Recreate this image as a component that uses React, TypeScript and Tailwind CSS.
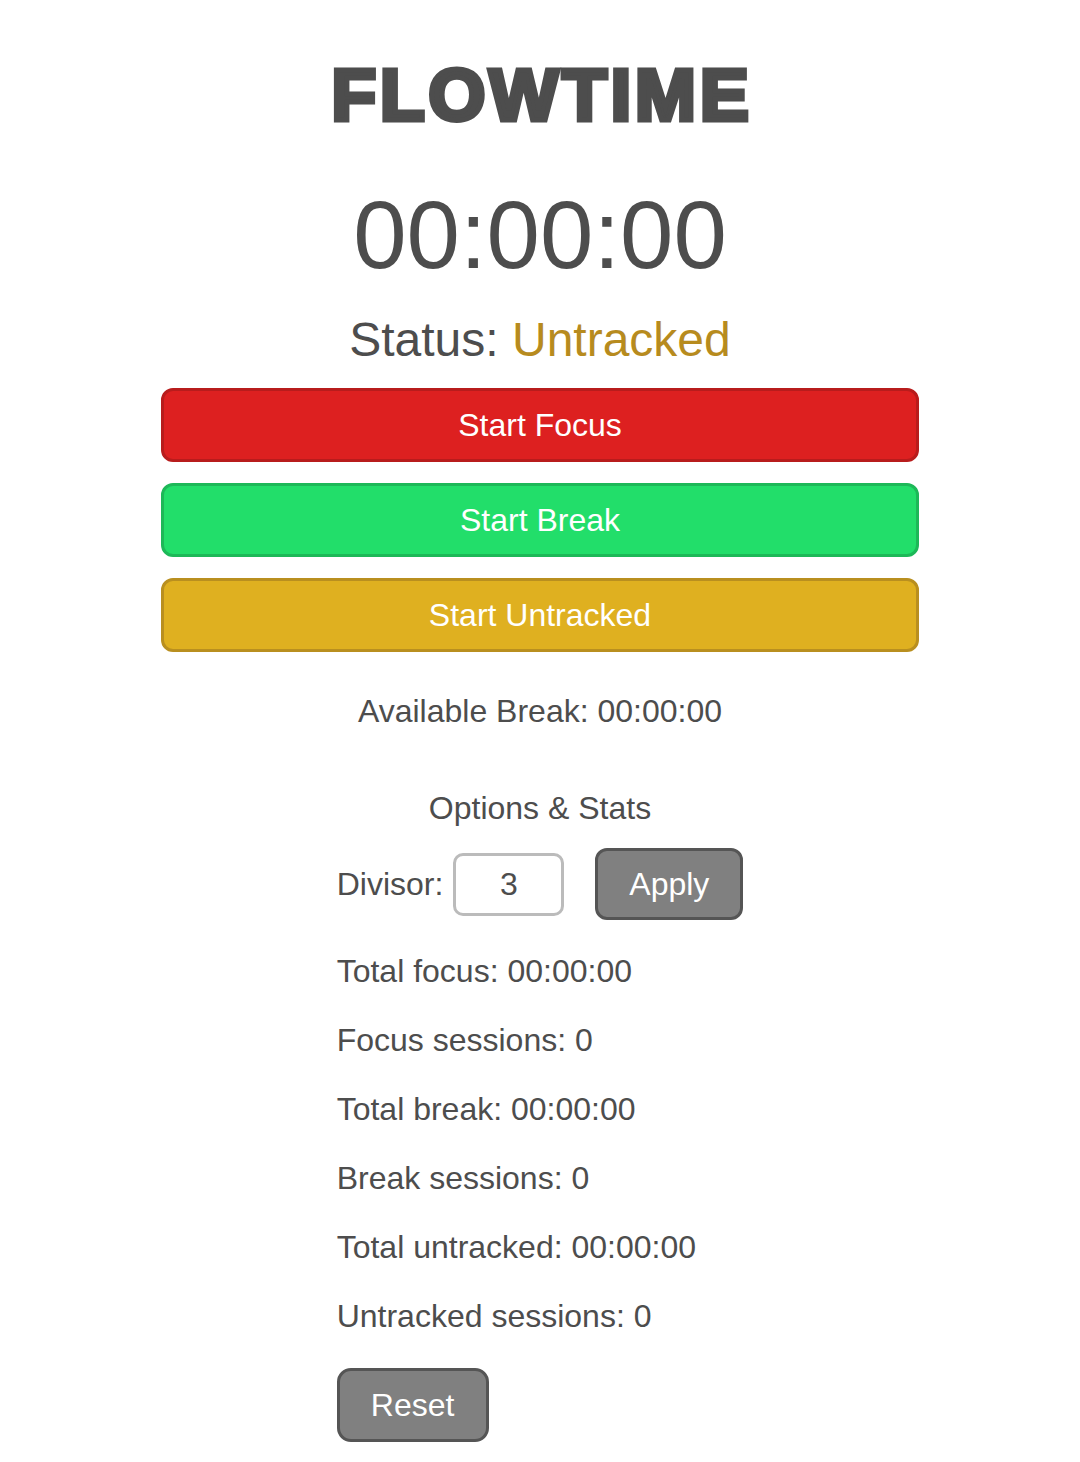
import React, { useState } from 'react';

const font = "font-['Liberation_Sans',Arial,sans-serif]";

const startButtons = [
  { label: 'Start Focus', cls: 'bg-[#dd2020] border-[#b81c1c]' },
  { label: 'Start Break', cls: 'bg-[#22de6a] border-[#1db858]' },
  { label: 'Start Untracked', cls: 'bg-[#dfb020] border-[#b98f1f]' },
];

export default function App() {
  const [divisor, setDivisor] = useState('3');

  const stats = [
    'Total focus: 00:00:00',
    'Focus sessions: 0',
    'Total break: 00:00:00',
    'Break sessions: 0',
    'Total untracked: 00:00:00',
    'Untracked sessions: 0',
  ];

  return (
    <div className={`${font} min-h-screen bg-white text-[#4d4d4d] flex flex-col items-center pt-[58px] pb-[20px]`}>
      {/* Title */}
      <h1 className="text-[73px] leading-none font-bold tracking-[4px] mr-[-4px] [-webkit-text-stroke:5px_#4d4d4d]">FLOWTIME</h1>

      {/* Timer */}
      <div className="mt-[56px] text-[96px] leading-none">00:00:00</div>

      <div className="mt-[33px] text-[48px] leading-none">
        Status: <span className="text-[#b78b1e]">Untracked</span>
      </div>

      {/* Mode buttons */}
      <div className="mt-[24px] w-[758px] flex flex-col gap-[21px]">
        {startButtons.map((b) => (
          <button
            key={b.label}
            className={`h-[74px] w-full rounded-[12px] border-[3px] text-white text-[32px] ${b.cls}`}
          >
            {b.label}
          </button>
        ))}
      </div>

      <div className="mt-[43px] text-[32px] leading-none">Available Break: 00:00:00</div>

      <div className="mt-[65px] text-[32px] leading-none">Options &amp; Stats</div>

      {/* Options */}
      <div className="mt-[24px] flex flex-col">
        <div className="flex items-center">
          <span className="text-[32px] leading-none">Divisor:</span>
          <input
            value={divisor}
            onChange={(e) => setDivisor(e.target.value)}
            className="ml-[10px] w-[111px] h-[63px] rounded-[10px] border-[3px] border-[#bbbbbb] text-center text-[32px] text-[#4d4d4d] outline-none"
          />
          <button className="ml-[31px] w-[148px] h-[72px] rounded-[12px] border-[3px] border-[#555555] bg-[#808080] text-white text-[32px]">
            Apply
          </button>
        </div>

        <div className="mt-[35px] flex flex-col gap-[37px]">
          {stats.map((s) => (
            <div key={s} className="text-[32px] leading-none">{s}</div>
          ))}
        </div>

        <button className="mt-[36px] w-[152px] h-[74px] rounded-[14px] border-[3px] border-[#555555] bg-[#808080] text-white text-[32px]">
          Reset
        </button>
      </div>
    </div>
  );
}
